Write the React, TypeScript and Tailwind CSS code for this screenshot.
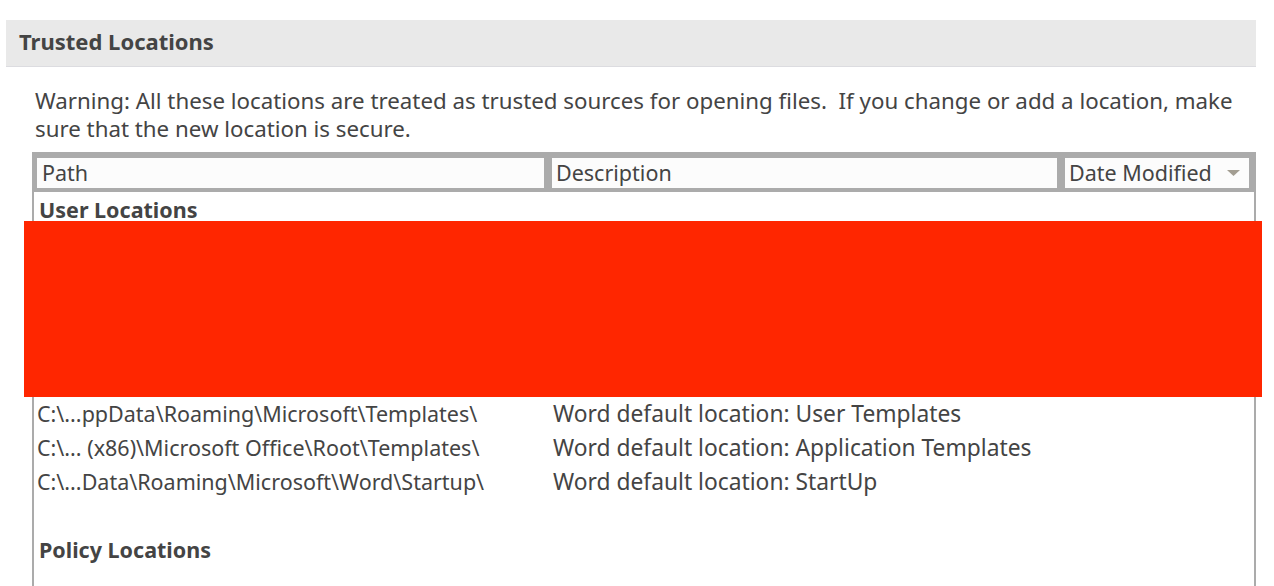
export default function App() {
  const rows: { path: string; desc: string }[] = [
    { path: "C:\\...ppData\\Roaming\\Microsoft\\Templates\\", desc: "Word default location: User Templates" },
    { path: "C:\\... (x86)\\Microsoft Office\\Root\\Templates\\", desc: "Word default location: Application Templates" },
    { path: "C:\\...Data\\Roaming\\Microsoft\\Word\\Startup\\", desc: "Word default location: StartUp" },
  ];

  return (
    <div
      className="relative w-[1274px] h-[586px] overflow-hidden bg-white text-[#444444] pt-[20px]"
      style={{ fontFamily: '"Noto Sans", "Open Sans", sans-serif' }}
    >
      <div className="ml-[6px] mr-[18px] h-[47px] bg-[#e9e9e9] border-b border-[#dcdce0] flex items-center pl-[13px] pb-[4px]">
        <span className="text-[22px] font-bold text-[#444444] leading-none">Trusted Locations</span>
      </div>

      <p className="pl-[35px] pr-[8px] pt-[20px] text-[22.3px] leading-[28px] whitespace-nowrap">
        Warning: All these locations are treated as trusted sources for opening files.&nbsp; If you change or add a location, make
        <br />
        sure that the new location is secure.
      </p>

      <div className="ml-[32px] w-[1224px] mt-[9px]">
        {/* column header */}
        <div className="flex bg-[#ababab] pt-[6px] pb-[4px] pl-[5px] pr-[7px] gap-[8px] h-[40px] text-[21.5px]">
          <div className="w-[507px] bg-[#fcfcfc] flex items-center pl-[5px]">Path</div>
          <div className="w-[505px] bg-[#fcfcfc] flex items-center pl-[4px]">Description</div>
          <div className="flex-1 bg-[#fcfcfc] flex items-center justify-between pl-[4px] pr-[9px]">
            <span>Date Modified</span>
            <svg width="13" height="6" viewBox="0 0 13 6">
              <path d="M0 0 L13 0 L6.5 6 Z" fill="#a39e92" />
            </svg>
          </div>
        </div>

        {/* list */}
        <div className="border-l-2 border-r-2 border-[#ababab] h-[420px] pt-px">
          <div className="h-[34px] flex items-center pl-[5px] font-bold text-[21.5px]">User Locations</div>
          <div className="h-[34px]" />
          <div className="h-[34px]" />
          <div className="h-[34px]" />
          <div className="h-[34px]" />
          <div className="h-[34px]" />
          {rows.map((r) => (
            <div key={r.path} className="h-[34px] flex items-center">
              <span className="w-[519px] pl-[3px] whitespace-nowrap text-[21.5px]">{r.path}</span>
              <span className="whitespace-nowrap text-[22.8px]">{r.desc}</span>
            </div>
          ))}
          <div className="h-[34px]" />
          <div className="h-[34px] flex items-center pl-[5px] font-bold text-[21.5px]">Policy Locations</div>
        </div>
      </div>

      {/* redaction */}
      <div className="absolute left-[24px] top-[221px] w-[1238px] h-[176px] bg-[#ff2600]" />
    </div>
  );
}
